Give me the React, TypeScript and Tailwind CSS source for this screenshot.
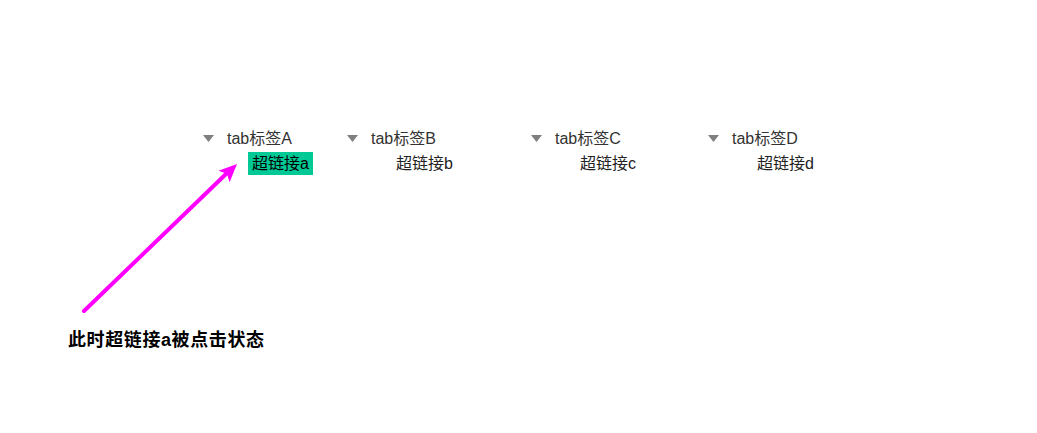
import React from 'react';

interface TabItem {
  label: string;
  link: string;
  width: string;
  active?: boolean;
}

const tabs: TabItem[] = [
  { label: 'tab标签A', link: '超链接a', width: 'w-[144px]', active: true },
  { label: 'tab标签B', link: '超链接b', width: 'w-[184px]' },
  { label: 'tab标签C', link: '超链接c', width: 'w-[177px]' },
  { label: 'tab标签D', link: '超链接d', width: 'w-[160px]' },
];

const Caret = () => (
  <svg width="11" height="7" viewBox="0 0 11 7" className="shrink-0">
    <polygon points="0,0 11,0 5.5,7" fill="#7f7f7f" />
  </svg>
);

const App: React.FC = () => {
  return (
    <div
      className="relative w-[1037px] h-[433px] bg-white overflow-hidden"
      style={{ fontFamily: '"Liberation Sans", "Noto Sans CJK SC", sans-serif' }}
    >
      <div className="flex pt-[126px] pl-[203px]">
        {tabs.map((tab) => (
          <div key={tab.label} className={`${tab.width} flex flex-col`}>
            <div className="flex items-center h-6">
              <Caret />
              <span className="ml-[13px] text-[16px] leading-6 text-[#333333] translate-y-[1px]">{tab.label}</span>
            </div>
            <div className="flex mt-[2px] ml-[45px]">
              <a
                href="#"
                className={
                  tab.active
                    ? 'px-[4px] h-[23px] leading-[23px] text-[16px] bg-[#00c996] text-black'
                    : 'px-[4px] h-[23px] leading-[23px] text-[16px] text-[#222222]'
                }
              >
                {tab.link}
              </a>
            </div>
          </div>
        ))}
      </div>

      <p className="pl-[68px] mt-[153px] text-[18px] leading-6 font-bold tracking-[0.6px] text-black">
        此时超链接a被点击状态
      </p>

      <svg
        className="absolute left-0 top-0 pointer-events-none"
        width="1037"
        height="433"
        viewBox="0 0 1037 433"
      >
        <line x1="84" y1="311" x2="226" y2="174" stroke="#ff00ff" strokeWidth="4" strokeLinecap="round" />
        <polygon points="237,164 229.6,182.3 226.9,173.7 218.5,170.7" fill="#ff00ff" />
      </svg>
    </div>
  );
};

export default App;
